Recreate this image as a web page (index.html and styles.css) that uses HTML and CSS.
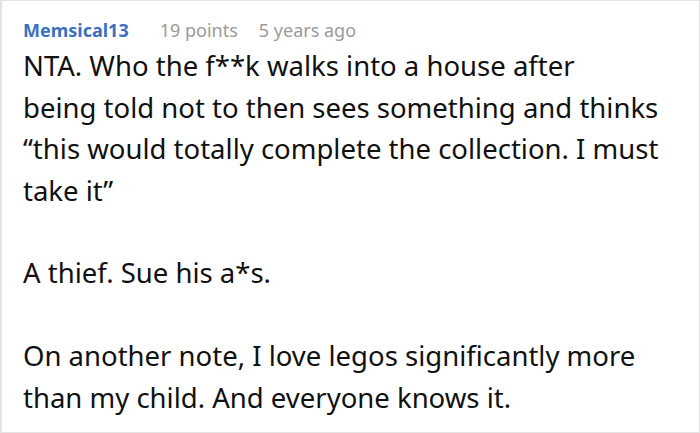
FILE: index.html
```html
<!DOCTYPE html>
<html>
<head>
<meta charset="utf-8">
<link rel="stylesheet" href="styles.css">
</head>
<body>
<div class="comment">
  <div class="meta">
    <span class="author">Memsical13</span>
    <span class="info points">19 points</span>
    <span class="info">5 years ago</span>
  </div>
  <div class="body">
    <p>NTA. Who the f**k walks into a house after being&nbsp;told not to then sees something and thinks “this would totally complete the collection. I must take it”</p>
    <p>A thief. Sue his a*s.</p>
    <p>On another note, I love legos significantly more than my child. And everyone knows it.</p>
  </div>
</div>
</body>
</html>
```
FILE: styles.css
```css
html, body {
  margin: 0;
  padding: 0;
  background: #fff;
}
.comment {
  box-sizing: border-box;
  width: 700px;
  height: 433px;
  border: 1px solid #e3e3e3;
  border-left-width: 2px;
  padding: 17px 30px 0 21px;
  font-family: "Noto Sans", sans-serif;
}
.meta {
  display: flex;
  font-size: 18px;
  line-height: 24px;
}
.author {
  color: #3b6fbf;
  font-weight: 700;
  margin-right: 31px;
}
.points {
  margin-right: 21px;
}
.info {
  color: #9a9a9a;
}
.body {
  margin-top: 3.3px;
  font-size: 27.5px;
  line-height: 41.4px;
  color: #111;
}
.body p {
  margin: 0 0 41.4px 0;
}
```
